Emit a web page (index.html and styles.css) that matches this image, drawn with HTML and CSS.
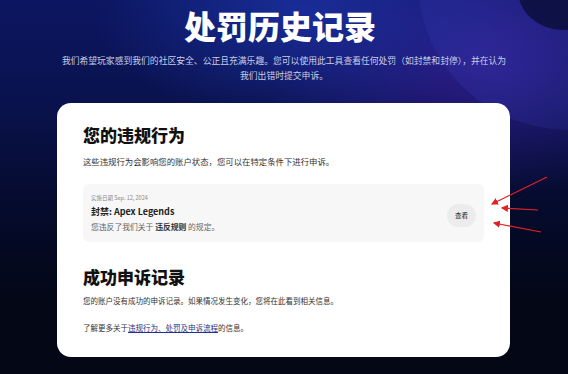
FILE: index.html
```html
<!DOCTYPE html>
<html lang="zh-CN">
<head>
    <meta charset="UTF-8">
    <meta name="viewport" content="width=device-width, initial-scale=1.0">
    <title>处罚历史记录</title>
    <link rel="stylesheet" href="styles.css">
</head>
<body>

<div class="page">
    <div class="glow"></div>
    <div class="corner"></div>

    <header class="hero">
        <h1 class="hero-title">处罚历史记录</h1>
        <p class="hero-text">我们希望玩家感到我们的社区安全、公正且充满乐趣。您可以使用此工具查看任何处罚（如封禁和封停），并在认为我们出错时提交申诉。</p>
    </header>

    <main class="card">
        <section class="section">
            <h2 class="section-title">您的违规行为</h2>
            <p class="section-text">这些违规行为会影响您的账户状态，您可以在特定条件下进行申诉。</p>

            <div class="violation">
                <div class="violation-info">
                    <div class="violation-date">实施日期 Sep. 12, 2024</div>
                    <div class="violation-name">封禁: Apex Legends</div>
                    <div class="violation-desc">您违反了我们关于 <b>违反规则</b> 的规定。</div>
                </div>
                <button class="view-btn">查看</button>
            </div>
        </section>

        <section class="section section-appeals">
            <h2 class="section-title">成功申诉记录</h2>
            <p class="section-text small">您的账户没有成功的申诉记录。如果情况发生变化，您将在此看到相关信息。</p>
            <p class="section-text small more">了解更多关于<a href="#">违规行为、处罚及申诉流程</a>的信息。</p>
        </section>
    </main>

    <svg class="arrows" width="80" height="80" viewBox="0 0 80 80">
        <defs>
            <marker id="head" markerWidth="6" markerHeight="6" refX="5" refY="3" orient="auto">
                <path d="M0,0 L6,3 L0,6 Z" fill="#e02424"/>
            </marker>
        </defs>
        <line x1="63" y1="7" x2="8" y2="34" stroke="#e02424" stroke-width="1.2" marker-end="url(#head)"/>
        <line x1="54" y1="40" x2="18" y2="38" stroke="#e02424" stroke-width="1.2" marker-end="url(#head)"/>
        <line x1="57" y1="62" x2="10" y2="53" stroke="#e02424" stroke-width="1.2" marker-end="url(#head)"/>
    </svg>
</div>

</body>
</html>
```

FILE: styles.css
```css
body {
    margin: 0;
    font-family: "Noto Sans CJK SC", "Noto Sans", sans-serif;
    background-color: #030716;
}

.page {
    position: relative;
    height: 374px;
    overflow: hidden;
    background:
        radial-gradient(ellipse 260px 140px at 300px 10px, rgba(28, 52, 170, 0.75), transparent 80%),
        radial-gradient(ellipse 260px 160px at 480px 60px, rgba(52, 30, 150, 0.8), transparent 85%),
        linear-gradient(180deg, #0c1660 0%, #0a1350 25%, #050b2c 55%, #030716 80%);
}

.glow {
    position: absolute;
    right: -150px;
    top: -170px;
    width: 300px;
    height: 300px;
    border-radius: 50%;
    background: radial-gradient(circle at 25% 75%, rgba(55, 65, 190, 0.28), rgba(40, 40, 160, 0.05) 70%);
}

.corner {
    position: absolute;
    right: -40px;
    top: -50px;
    width: 90px;
    height: 80px;
    border-radius: 50%;
    background-color: rgba(8, 12, 50, 0.75);
}

.hero {
    position: relative;
    text-align: center;
    padding-top: 7px;
}

.hero-title {
    margin: 0;
    font-size: 32px;
    line-height: 36px;
    font-weight: 900;
    color: #fff;
    padding-right: 8px;
}

.hero-text {
    width: 450px;
    margin: 10px auto 0;
    font-size: 8.8px;
    line-height: 15px;
    color: #c9cde4;
}

.card {
    position: relative;
    width: 401px;
    margin: 20px 0 0 57px;
    padding: 22px 26px 23px;
    background-color: #fff;
    border-radius: 14px;
}

.section-title {
    margin: 0;
    font-size: 17px;
    line-height: 20px;
    font-weight: 900;
    color: #111;
}

.section-text {
    margin: 10px 0 0;
    font-size: 8.4px;
    line-height: 12px;
    color: #333;
}

.section-text.small {
    font-size: 7.5px;
}

.section-appeals {
    margin-top: 25px;
}

.section-appeals .section-text {
    margin-top: 8px;
}

.section-text.more {
    margin-top: 15px;
}

.section-text a {
    color: #23338a;
    text-decoration: underline;
}

.violation {
    display: flex;
    align-items: center;
    justify-content: space-between;
    margin-top: 17px;
    padding: 8px;
    height: 42px;
    background-color: #f7f7f7;
    border-radius: 6px;
}

.violation-date {
    font-size: 5.5px;
    line-height: 8px;
    color: #888;
}

.violation-name {
    margin-top: 3px;
    font-size: 9px;
    line-height: 14px;
    font-weight: 700;
    color: #222;
}

.violation-desc {
    margin-top: 2px;
    font-size: 7.8px;
    line-height: 12px;
    color: #666;
}

.violation-desc b {
    color: #333;
}

.view-btn {
    width: 29px;
    height: 23px;
    margin-top: 4px;
    border: none;
    border-radius: 12px;
    background-color: #ececec;
    font-family: inherit;
    font-size: 6.5px;
    color: #222;
    padding: 0;
}

.arrows {
    position: absolute;
    left: 484px;
    top: 170px;
}
```
